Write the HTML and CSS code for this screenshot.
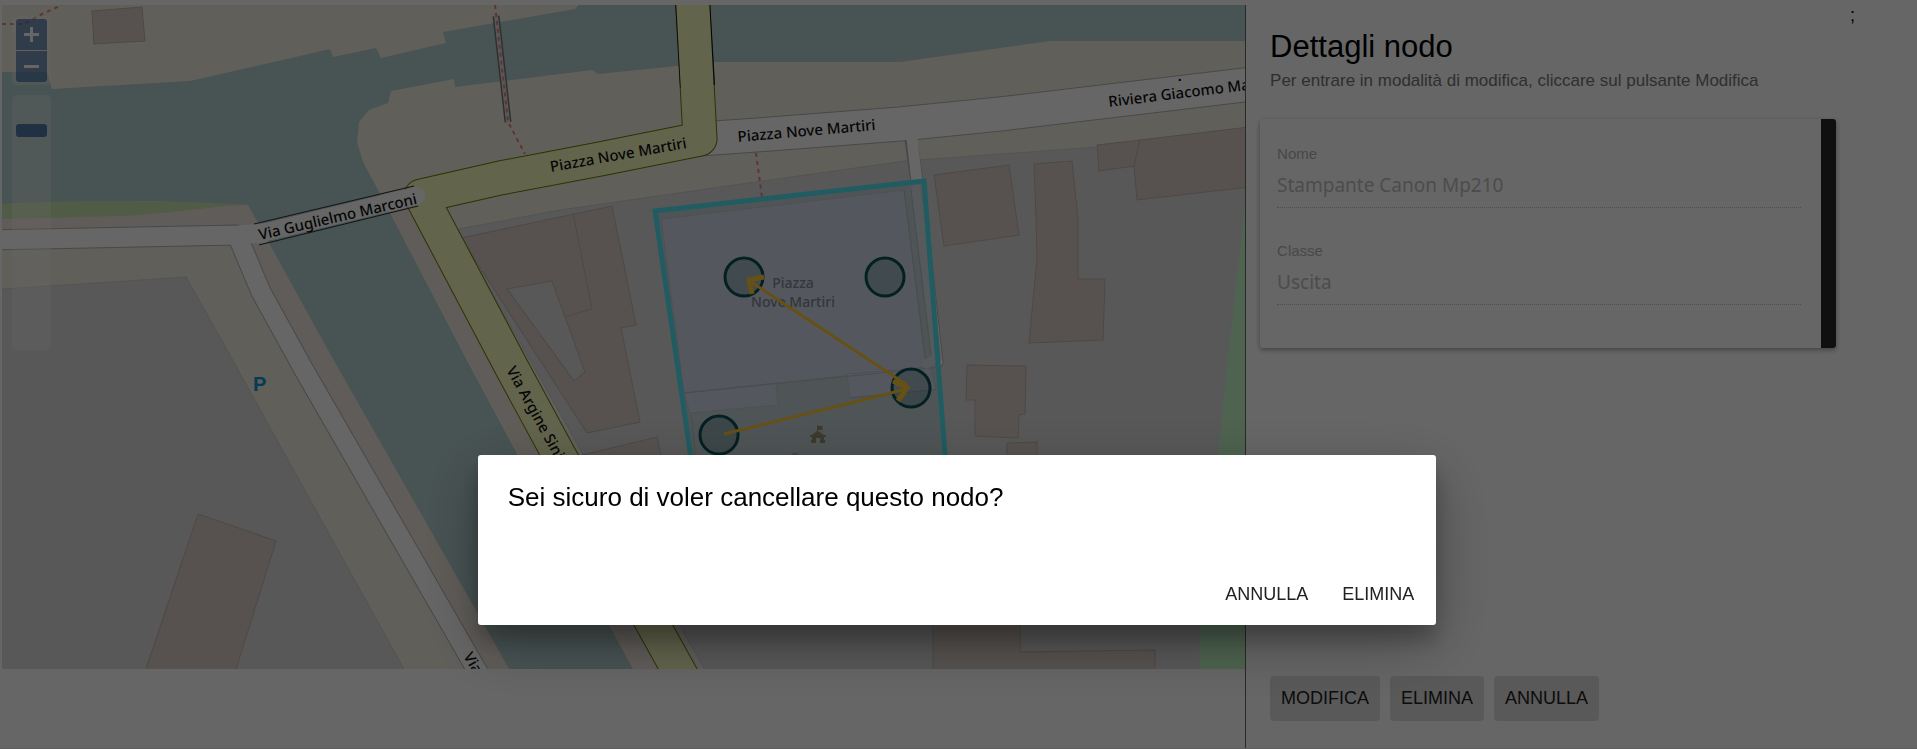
FILE: index.html
```html
<!DOCTYPE html>
<html lang="it">
<head>
<meta charset="utf-8">
<title>Dettagli nodo</title>
<link rel="stylesheet" href="styles.css">
</head>
<body>
<div class="page">
  <main class="map-column">
    <div class="map">
      <svg class="map-canvas" viewBox="2 5 1243 664" preserveAspectRatio="xMinYMin slice" role="img" aria-label="Mappa di Piazza Nove Martiri">
        <rect class="land" x="0" y="0" width="1300" height="700"/>
        <!-- banks -->
        <polygon class="bank" points="2,204 248,200 509,669 485,669 240,240 2,240"/>
        <polygon class="bank" points="379,192 430,200 706,669 633,669"/>
        <!-- water -->
        <polygon class="water" points="0,72 47,72 52,89 190,81 330,49 333,57 376,48 381,58 446,43 443,32 575,9 580,3 1250,3 1250,41 1050,41 900,62 715,62 598,74 592,70 455,87 454,79 391,91 388,103 369,110 359,122 357,142 363,162 379,192 472,370 609,625 633,669 509,669 478,614 328,350 248,205 150,201 0,204"/>
        <path class="park" d="M0 204C60 201 150 199 248 205C220 205 160 215 120 216L0 219Z"/>
        <!-- residential blocks -->
        <polygon class="block" points="0,289 50,286 186,277 227,350 404,669 404,700 0,700"/>
        <polygon class="block" points="459,229 560,210 770,180 905,161 1097,147 1250,130 1250,700 722,700 461,238"/>
        <polygon class="pitch" points="1250,190 1245,205 1231,330 1218,455 1200,620 1199,700 1250,700"/>
        <!-- buildings -->
        <g class="building">
          <polygon points="92,11 142,7 145,41 94,44"/>
          <polygon points="198,514 276,541 236,669 225,700 135,700 146,669"/>
          <path fill-rule="evenodd" d="M461 238L612 206L636 325L621 328L640 422L587 433ZM507 289L552 281L585 372L574 381Z"/>
          <path d="M573 213L592 309L565 317"/>
          <polygon points="582,455 657,437 664,470 590,470"/>
          <polygon points="934,175 1009,165 1019,235 944,246"/>
          <polygon points="1034,164 1072,161 1078,220 1078,279 1105,279 1103,340 1029,343 1037,258 1036,220"/>
          <polygon points="1097,145 1140,140 1134,166 1099,171"/>
          <polygon points="1140,140 1250,127 1250,187 1137,200 1134,166"/>
          <polygon points="967,365 1026,366 1025,414 1019,415 1018,438 975,436 975,400 966,400"/>
          <polygon points="1007,443 1037,442 1037,470 1007,470"/>
          <polygon points="933,600 1020,600 1020,652 1155,650 1155,680 933,680"/>
        </g>
        <!-- roads -->
        <g class="casing">
          <path stroke-width="21" d="M-10 240L237 235L261 292L304 370L486 686"/>
          <path stroke-width="35" d="M700 139L770 134L900 124L1000 114L1260 83"/>
          <path stroke-width="13" d="M911 140L917 182L937 362L926 364"/>
        </g>
        <g class="street">
          <path stroke-width="19" d="M-10 240L237 235L261 292L304 370L486 686M237 235L262 233"/>
          <path stroke-width="33" d="M700 139L770 134L900 124L1000 114L1260 83"/>
          <path stroke-width="11" d="M911 130L917 182L937 362L926 364"/>
        </g>
        <path class="main-casing" d="M692 -10L700 139L600 159L500 178L421 196L513 370L559 455L696 702"/>
        <path class="bridge-rail" d="M676 0L681 88M709 0L714 85"/>
        <path class="main-road" d="M692 -10L700 139L600 159L500 178L421 196L513 370L559 455L696 702"/>
        <path class="rail" d="M254 224L414 186M259 245L418 206"/>
        <path class="street" stroke-width="18" d="M258 234L416 196"/>
        <!-- footpaths -->
        <path class="foot-casing" d="M496 16L508 122"/>
        <path class="foot-deck" d="M496 16L508 122"/>
        <path class="foot" d="M2 24L24 24L40 15L62 5M495 5L508 122L525 154M756 153L763 205"/>
        <!-- square and its zone -->
        <polygon class="zone-fill" points="655,211 924,181 950,520 700,520"/>
        <polygon class="square" points="661,219 904,190 927,367 684,393"/>
        <path class="square" d="M684 393L776 383L778 405L690 413ZM847 374L930 367L936 390L850 398Z"/>
        <path class="thin" d="M911 190L931 357L925 358L904 190M684 393L940 367M691 415L696 460M850 398L940 389"/>
        <path class="lane" d="M916 188L937 358L926 364"/>
        <polygon class="zone" points="655,211 924,181 950,520 700,520"/>
        <path class="town-hall" d="M817 425H818V426H823L822 428L823 430H818V431L824 435H826V437H824V440H825V443H820V438H816V443H811V440H812V437H810V435H812L817 431Z"/>
        <g class="map-text place">
          <text x="793" y="288">Piazza</text>
          <text x="793" y="307">Nove Martiri</text>
          <text class="hall-name" x="818" y="463">Comune</text>
        </g>
        <g class="nodes">
          <circle cx="744" cy="277" r="19"/>
          <circle cx="885" cy="277" r="19"/>
          <circle cx="911" cy="388" r="19"/>
          <circle cx="719" cy="435" r="19"/>
        </g>
        <g class="links">
          <path d="M907 385L748 280M724 434L907 389"/>
          <path class="head" d="M764 277L749 280L752 294M893 381L907 388L898 401"/>
        </g>
        <g class="map-text">
          <text transform="translate(260 240) rotate(-13)">Via Guglielmo Marconi</text>
          <text transform="translate(551 172) rotate(-10)">Piazza Nove Martiri</text>
          <text transform="translate(738 142) rotate(-5)">Piazza Nove Martiri</text>
          <text transform="translate(1109 107) rotate(-7)">Riviera Giacomo Matteotti</text>
          <text transform="translate(506 370) rotate(61)">Via Argine Sinistro</text>
          <text transform="translate(463 656) rotate(60)">Via</text>
        </g>
        <text class="parking" x="253" y="391">P</text>
      </svg>
      <div class="controls">
        <div class="zoom">
          <button class="zoom-in" type="button" aria-label="Ingrandisci"><svg viewBox="0 0 15 15"><path d="M0 7.500H15M7.500 0V15"/></svg></button>
          <button class="zoom-out" type="button" aria-label="Riduci"><svg viewBox="0 0 15 15"><path d="M0 7.500H15"/></svg></button>
        </div>
        <div class="slider"><button class="thumb" type="button" aria-label="Livello di zoom"></button></div>
      </div>
      <span class="stray-dot">.</span>
    </div>
  </main>
  <aside class="details">
    <span class="stray-mark">;</span>
    <header class="heading">
      <h1>Dettagli nodo</h1>
      <p>Per entrare in modalità di modifica, cliccare sul pulsante Modifica</p>
    </header>
    <form class="card">
      <div class="field">
        <label for="nome">Nome</label>
        <input id="nome" type="text" value="Stampante Canon Mp210" disabled>
      </div>
      <div class="field">
        <label for="classe">Classe</label>
        <input id="classe" type="text" value="Uscita" disabled>
      </div>
    </form>
    <div class="actions">
      <button class="btn" type="button">MODIFICA</button>
      <button class="btn" type="button">ELIMINA</button>
      <button class="btn" type="button">ANNULLA</button>
    </div>
  </aside>
</div>
<div class="overlay">
  <section class="dialog" role="dialog" aria-modal="true" aria-labelledby="dialog-title">
    <h2 id="dialog-title">Sei sicuro di voler cancellare questo nodo?</h2>
    <div class="dialog-actions">
      <button class="btn-flat" type="button">ANNULLA</button>
      <button class="btn-flat" type="button">ELIMINA</button>
    </div>
  </section>
</div>
</body>
</html>
```
FILE: styles.css
```css
* { box-sizing: border-box; }
body {
  margin: 0;
  background: #fff;
  color: #000;
  font-family: "Liberation Sans", Arial, sans-serif;
}
button { font-family: inherit; border: 0; cursor: pointer; }

.page {
  display: flex;
  min-height: 100vh;
  padding-top: 5px;
  border-bottom: 1px solid #eee;
}
.map-column {
  display: flex;
  width: 65%;
  padding: 0 0 79px 2px;
  border-right: 1px solid #666;
}
.map { position: relative; flex: 1; overflow: hidden; }
.map-canvas { position: absolute; inset: 0; width: 100%; height: 100%; }

.land { fill: #f2ede2; }
.bank { fill: #efe7de; }
.water { fill: #b4cfcf; }
.park { fill: #cbe5ae; }
.block { fill: #dcdcdc; stroke: #cfcfcf; }
.pitch { fill: #c4f8c8; }
.building { fill: #d9cec7; stroke: #c4b4aa; }
.building path:nth-of-type(2) { fill: none; }
.casing, .street, .main-casing, .main-road { fill: none; stroke-linejoin: round; }
.casing { stroke: #b4b4b4; }
.street { stroke: #fff; stroke-linecap: round; }
.main-casing { stroke: #707d05; stroke-width: 35; }
.main-road { stroke: #f6f9bf; stroke-width: 33; }
.bridge-rail { fill: none; stroke: #111; stroke-width: 2; }
.rail { fill: none; stroke: #333; stroke-width: 1; }
.foot-casing { stroke: #777; stroke-width: 7; }
.foot-deck { stroke: #ddd; stroke-width: 4; }
.foot { fill: none; stroke: #f08080; stroke-width: 2; stroke-dasharray: 4 4; }
.zone-fill { fill: #c5d4d6; }
.square { fill: #d3dcea; stroke: #bfc9cf; }
.thin { fill: none; stroke: #b3bfc2; }
.lane { fill: none; stroke: #d8e2e6; stroke-width: 9; stroke-linecap: round; stroke-linejoin: round; }
.zone { fill: none; stroke: #50e6f2; stroke-width: 5; }
.town-hall { fill: #969072; }
.nodes { fill: #003c46; fill-opacity: .22; stroke: #0a5058; stroke-width: 3; }
.links { fill: none; stroke: #ffc832; stroke-width: 3; }
.links .head { stroke-width: 5; }
.map-text { font-family: "Noto Sans", sans-serif; font-size: 15px; font-weight: 500; fill: #111; }
.place { font-size: 14px; fill: #808792; text-anchor: middle; }
.hall-name { fill: #a8a68e; }
.parking { font-size: 20px; font-weight: 700; fill: #0e93d8; }

.controls {
  position: absolute;
  top: 11px;
  left: 10px;
  display: flex;
  flex-direction: column;
  gap: 10px;
}
.zoom, .slider { width: 39px; border-radius: 5px; background: rgba(255, 255, 255, .3); }
.zoom { display: flex; flex-direction: column; gap: 1px; padding: 3px 4px; }
.zoom button {
  display: grid;
  place-items: center;
  height: 31px;
  padding: 0;
  background: rgba(0, 60, 136, .5);
}
.zoom svg { width: 15px; height: 15px; stroke: #fff; stroke-width: 3; }
.zoom-in { border-radius: 3px 3px 0 0; }
.zoom-out { border-radius: 0 0 3px 3px; }
.slider { height: 255px; padding: 29px 4px 0; }
.thumb { display: block; width: 31px; height: 13px; padding: 0; border-radius: 3px; background: rgba(0, 60, 136, .6); }
.stray-dot { position: absolute; top: 59px; left: 1175px; font-size: 20px; line-height: 20px; }

.details { position: relative; flex: 1; display: flex; flex-direction: column; padding: 24px 81px 27px 14px; }
.stray-mark { position: absolute; top: 0; right: 62px; font-size: 18px; line-height: 20px; }
.heading { padding-left: 10px; }
h1 { margin: 0; font-size: 31px; font-weight: 400; line-height: 36px; }
.heading p { margin: 4px 0 0; font-size: 17px; line-height: 24px; color: #757575; }
.card {
  margin-top: 26px;
  height: 229px;
  padding: 25px 18px 0 17px;
  border-right: 15px solid #282828;
  border-radius: 3px;
  box-shadow: 0 2px 5px rgba(0, 0, 0, .35);
}
.field { display: flex; flex-direction: column; height: 97px; padding-right: 2px; }
.field label { font-size: 15px; line-height: 20px; color: #b4b4b4; }
.field input {
  height: 44px;
  padding: 0 0 2px;
  border: 0;
  border-bottom: 1px dotted #c4c4c4;
  background: transparent;
  font-family: "Noto Sans", sans-serif;
  font-size: 19px;
  color: #bebebe;
}
.actions { display: flex; gap: 10px; margin-top: auto; padding-left: 10px; }
.btn {
  height: 45px;
  padding: 0 11px;
  border-radius: 4px;
  background: #dfdfdf;
  font-size: 18px;
  color: #212121;
}

.overlay {
  position: fixed;
  inset: 0;
  display: flex;
  justify-content: center;
  align-items: flex-end;
  padding: 0 3px 124px 0;
  background: rgba(0, 0, 0, .6);
}
.dialog {
  width: 50%;
  min-width: 50vw;
  padding: 26px 12px 10px;
  border-radius: 3px;
  background: #fff;
  box-shadow: 0 19px 60px rgba(0, 0, 0, .3), 0 15px 20px rgba(0, 0, 0, .22);
}
h2 { margin: 0 0 57px; padding-left: 18px; font-size: 26px; font-weight: 400; line-height: 32px; }
.dialog-actions { display: flex; justify-content: flex-end; gap: 14px; }
.btn-flat { height: 45px; min-width: 92px; padding: 3px 10px 0; background: transparent; font-size: 18px; color: #212121; }
```
